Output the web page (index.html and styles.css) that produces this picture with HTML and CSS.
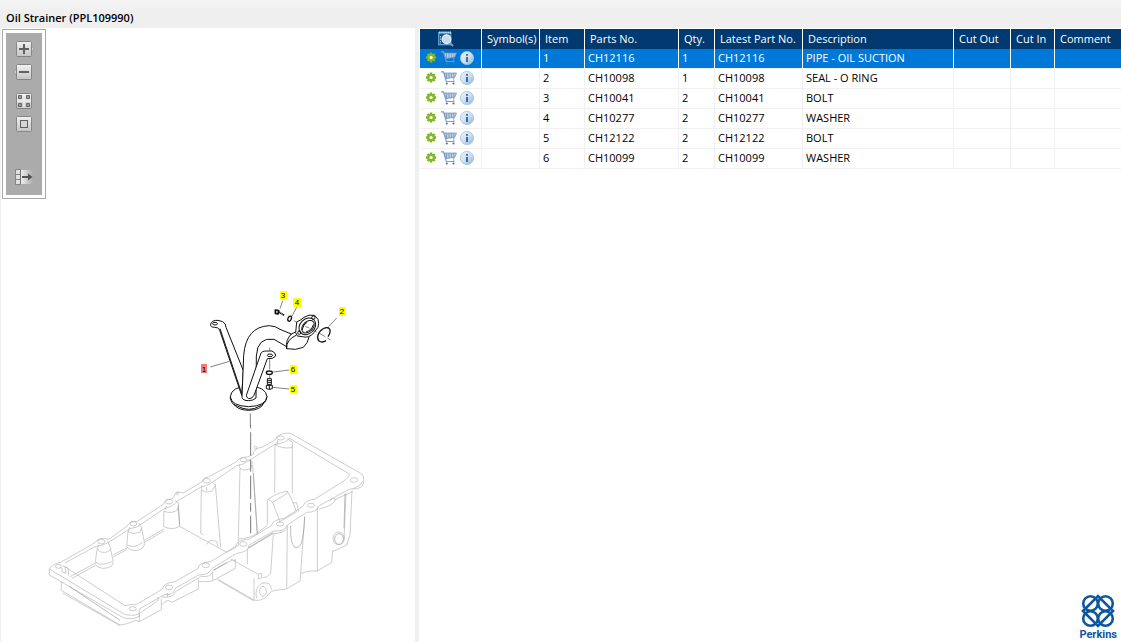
FILE: index.html
```html
<!DOCTYPE html>
<html lang="en">
<head>
    <meta charset="UTF-8">
    <meta name="viewport" content="width=device-width, initial-scale=1.0">
    <title>Oil Strainer (PPL109990)</title>
    <link rel="stylesheet" href="styles.css">
</head>
<body>
    <!-- shared icons -->
    <svg class="sprite" aria-hidden="true">
        <defs>
            <linearGradient id="btnFill" x1="0" y1="0" x2="0" y2="1">
                <stop offset="0" stop-color="#f2f2f2"/>
                <stop offset="1" stop-color="#c4c4c4"/>
            </linearGradient>
            <linearGradient id="fadeFill" x1="0" y1="0" x2="1" y2="0">
                <stop offset="0" stop-color="#eeeeee"/>
                <stop offset="1" stop-color="#ababab"/>
            </linearGradient>
            <linearGradient id="infoFill" x1="0" y1="0" x2="1" y2="1">
                <stop offset="0" stop-color="#edf5fb"/>
                <stop offset="0.5" stop-color="#cfe1f1"/>
                <stop offset="1" stop-color="#8fb3d8"/>
            </linearGradient>
        </defs>
        <symbol id="gear" viewBox="0 0 12 12">
            <g stroke="#7ab51d" stroke-width="2.4">
                <path d="M5 .6V10.400M0 5.500H10.200M1.500 2L8.700 9M8.700 2L1.500 9"/>
            </g>
            <circle cx="5.100" cy="5.500" r="2.700" fill="none" stroke="#86b82b" stroke-width="2"/>
            <circle class="gear-hole" cx="5.100" cy="5.500" r="1.600"/>
        </symbol>
        <symbol id="cart" viewBox="0 0 16 14">
            <path d="M0 .8H2.500L5.300 10.500H13.500" fill="none" stroke="#7f9cc0" stroke-width="1.200"/>
            <path d="M3 2H15.500L13.600 6.500L5 7.500Z" fill="#b9cee4" stroke="#6a8fba" stroke-width=".7"/>
            <path d="M5.600 2V7.500M8 2V7M10.400 2V7M12.800 2V7" stroke="#5c84b3" stroke-width=".6"/>
            <path d="M12.800 7V10" stroke="#7f9cc0" stroke-width=".8"/>
            <circle cx="5.800" cy="12.500" r="1.100" fill="#4a72a5"/>
            <circle cx="12.500" cy="12.500" r="1.100" fill="#4a72a5"/>
        </symbol>
        <symbol id="info" viewBox="0 0 14 14">
            <circle cx="7" cy="7" r="6.600" fill="url(#infoFill)" stroke="#a3c1de" stroke-width=".8"/>
            <path d="M6 3H8V4.800H6ZM6 6H8V11H6Z" fill="#3c6ca5"/>
        </symbol>
    </svg>

    <header class="title-bar">
        <h1>Oil Strainer (PPL109990)</h1>
    </header>

    <main class="viewer">
        <section class="drawing">
            <div class="toolbar">
                <div class="toolbar-inner">
                    <button type="button" aria-label="Zoom in">
                        <svg width="20" height="16" viewBox="0 0 20 16">
                            <path d="M17 4.500L19.500 8L17 11.500Z" fill="#e8e8e8" stroke="#8c8c8c" stroke-width=".6"/>
                            <rect x="2.500" y=".5" width="15" height="15" rx="1" fill="url(#btnFill)" stroke="#858585"/>
                            <path d="M5 8H15M10 3V13" stroke="#606060" stroke-width="2"/>
                        </svg>
                    </button>
                    <button type="button" aria-label="Zoom out">
                        <svg width="20" height="16" viewBox="0 0 20 16">
                            <path d="M3 4.500L.5 8L3 11.500Z" fill="#e8e8e8" stroke="#8c8c8c" stroke-width=".6"/>
                            <rect x="2.500" y=".5" width="15" height="15" rx="1" fill="url(#btnFill)" stroke="#858585"/>
                            <path d="M5 8H15" stroke="#606060" stroke-width="2"/>
                        </svg>
                    </button>
                    <button type="button" class="group-start" aria-label="Show all">
                        <svg width="20" height="16" viewBox="0 0 20 16">
                            <rect x="2.500" y=".5" width="15" height="15" rx="1" fill="url(#btnFill)" stroke="#858585"/>
                            <path d="M10 1V15M3 8H17" stroke="#f4f4f4"/>
                            <path d="M4.500 2.500h3v3h-3zM12.500 2.500h3v3h-3zM4.500 10.500h3v3h-3zM12.500 10.500h3v3h-3z" fill="#999999" stroke="#666666"/>
                        </svg>
                    </button>
                    <button type="button" aria-label="Fit to window">
                        <svg width="20" height="16" viewBox="0 0 20 16">
                            <rect x="2.500" y=".5" width="15" height="15" rx="1" fill="url(#btnFill)" stroke="#858585"/>
                            <rect x="6.500" y="4.500" width="7" height="7" fill="#d6d6d6" stroke="#606060"/>
                        </svg>
                    </button>
                    <button type="button" class="last" aria-label="Hide parts list">
                        <svg width="20" height="16" viewBox="0 0 20 16">
                            <rect x="7" y="1" width="12" height="14" fill="url(#fadeFill)"/>
                            <path d="M1.500 .5h5v15h-5z" fill="#e0e0e0" stroke="#858585"/>
                            <path d="M1 5.500H7M1 10.500H7" stroke="#858585"/>
                            <path d="M6.500 1V15" stroke="#707070"/>
                            <path d="M8 7H14V4.500L18.500 8L14 11.500V9H8Z" fill="#555555"/>
                        </svg>
                    </button>
                </div>
            </div>

            <svg class="diagram" viewBox="1 28 414 614" role="img" aria-label="Exploded view of the oil strainer">
                <!-- oil pan -->
                <svg x="40" y="425" width="340" height="210" viewBox="0 0 1020 630">
                    <g class="pan">
                        <!-- rim -->
                        <path d="M28 432Q40 415 62 412L165 353Q172 340 190 340L206 343L262 303Q268 288 290 290L370 238Q374 222 396 222L402 215Q405 196 430 204L485 171Q490 157 506 155L590 110Q598 96 622 96L640 88Q640 70 668 66L705 45Q712 24 750 24L962 145Q974 150 971 175Q966 192 938 192"/>
                        <path d="M75 414L165 365Q190 362 206 352L270 311Q290 310 306 296L374 250Q400 246 412 228L485 185Q500 184 512 175L590 122Q610 120 624 108L705 58Q740 54 748 40L930 148Q920 165 905 172L825 222Q795 225 788 245L732 280Q698 284 694 302L628 342Q590 345 586 365L512 410Q475 412 475 430L405 470Q370 474 368 492L290 538Q265 538 255 542L88 434Q80 426 68 422"/>
                        <path d="M28 432L250 566Q275 576 298 566L352 528Q360 520 352 516M28 432V450L250 578Q275 586 298 574V552"/>
                        <path d="M298 552L375 508Q400 512 406 490L475 450Q508 450 516 430L590 385Q625 382 628 360L700 318Q736 320 742 300L800 262Q832 262 838 242L925 194Q960 188 968 168"/>
                        <path d="M365 516Q400 520 406 500L484 454Q510 458 518 442M382 504V516M742 310Q730 325 700 326M838 252Q880 242 888 222L938 200M870 228Q880 212 888 226"/>
                        <!-- bolt holes -->
                        <ellipse cx="55" cy="424" rx="9" ry="6"/>
                        <ellipse cx="184" cy="350" rx="11" ry="7"/>
                        <ellipse cx="280" cy="296" rx="10" ry="7"/>
                        <ellipse cx="387" cy="230" rx="11" ry="7"/>
                        <ellipse cx="500" cy="167" rx="11" ry="7"/>
                        <ellipse cx="610" cy="104" rx="10" ry="6"/>
                        <ellipse cx="722" cy="39" rx="11" ry="6"/>
                        <ellipse cx="942" cy="165" rx="11" ry="7"/>
                        <ellipse cx="813" cy="241" rx="11" ry="6"/>
                        <ellipse cx="720" cy="297" rx="11" ry="6"/>
                        <ellipse cx="610" cy="357" rx="11" ry="7"/>
                        <ellipse cx="497" cy="421" rx="11" ry="7"/>
                        <ellipse cx="387" cy="487" rx="11" ry="7"/>
                        <ellipse cx="278" cy="551" rx="11" ry="6"/>
                        <circle cx="647" cy="68" r="4"/>
                        <circle cx="412" cy="205" r="4"/>
                        <!-- posts on the inside wall -->
                        <path d="M172 370L165 415Q170 430 192 430Q222 428 219 408L212 372M172 370Q178 384 194 382Q212 380 212 370L203 350M168 412Q185 425 215 410M172 370L178 360"/>
                        <path d="M264 320L260 365Q268 377 288 377Q316 372 313 352L305 310M264 320Q280 330 300 322L305 308L296 294M262 360Q282 372 308 352M264 320L270 306"/>
                        <path d="M372 258L371 304Q395 318 419 304L415 250M372 258Q390 268 412 256L416 236L405 226M374 256L380 242"/>
                        <path d="M484 196L482 325L490 330M484 196Q500 206 516 198L526 180L516 170M526 178L542 368M500 198V186M484 196L486 180"/>
                        <path d="M600 130L595 340M600 130Q615 140 632 130L638 112L622 104M638 120L652 330M600 130L598 118"/>
                        <path d="M705 55L704 205M705 58Q722 72 756 68L758 52L740 40M757 60V205M712 45V58"/>
                        <!-- inside floor -->
                        <path d="M90 455L165 415M96 460L165 422M219 390L262 368M219 396L260 374M313 346L371 312M313 352L371 318M419 304L560 382M560 382L595 362L595 342Q630 340 652 325L682 300M500 358Q510 340 530 350L535 366M60 425Q70 432 66 440L78 445L75 425L84 430L86 452"/>
                        <path d="M682 298V225Q705 205 742 198L740 206L698 232L720 290M742 198L758 230L770 262M698 232L684 222M758 235L770 232L776 260M716 292L768 262"/>
                        <!-- outer body -->
                        <path d="M64 470V496L240 600L262 596L282 588Q290 584 298 590L364 554V522M68 504L240 602M298 566V590M364 540L378 528Q388 524 396 532L475 492V462M475 470H510L532 460L586 430V402M518 440V464M586 408Q578 400 568 410L520 436"/>
                        <path d="M532 462L642 525Q660 530 680 515Q690 495 715 495L740 492L780 468L782 445Q805 435 832 438L875 412L878 376M535 466L642 528M642 525V460M572 402L655 448V462L665 458V445L655 448"/>
                        <path d="M622 372V418M700 325L692 445Q680 460 668 458M742 302L740 490M782 445L794 275M832 245V438M918 205L912 345M936 196L930 330L920 360L878 380M625 368L700 322"/>
                        <path d="M650 520Q642 490 665 475Q695 468 694 495"/>
                        <ellipse cx="669" cy="499" rx="10" ry="15"/>
                        <ellipse cx="896" cy="340" rx="17" ry="19"/>
                    </g>
                    <g class="pan-dark">
                        <path d="M752 302Q750 355 764 367Q778 370 784 355Q792 330 794 275M640 145L652 325M915 206L912 310M625 370L698 326M520 436L560 412M88 484L240 586M415 240L419 300"/>
                        <ellipse cx="897" cy="342" rx="13" ry="16"/>
                    </g>
                    <path class="axis" d="M632 0V10M632 22V92M632 104V140M632 152V222M632 234V260M632 272V325"/>
                </svg>

                <!-- strainer, bolts and washers -->
                <svg x="190" y="280" width="170" height="150" viewBox="0 0 510 450">
                    <g class="part">
                        <path d="M121 350Q124 320 176 318Q228 320 231 350Q228 378 176 380Q124 378 121 350V356Q128 378 142 378Q176 398 210 378Q228 370 231 350M132 371Q140 390 176 391Q214 390 220 370"/>
                        <path class="solid" d="M62 132Q66 120 84 121L98 125Q108 130 108 142L160 272L155 346L88 148Q84 142 74 142Q60 142 62 132Z"/>
                        <path d="M90 146L155 340"/>
                        <ellipse cx="75" cy="131" rx="7" ry="4"/>
                        <path class="solid" d="M156 352L161 226Q168 140 238 137Q258 138 270 148L304 162L290 200L252 178Q202 170 199 228L198 354Q190 362 176 362Q158 362 156 352Z"/>
                        <path class="solid" d="M290 206Q286 180 304 162L330 150L358 168Q354 190 340 202Q318 212 290 206ZM290 206Q288 180 318 166"/>
                        <path class="solid" d="M317 158L320 126Q334 120 342 112Q356 102 374 106L384 118Q388 130 384 142L372 158Q356 176 338 170L322 168Z"/>
                        <ellipse cx="352" cy="139" rx="22" ry="28" transform="rotate(45 352 139)"/>
                        <ellipse cx="354" cy="140" rx="15" ry="22" transform="rotate(45 354 140)"/>
                        <path d="M336 150Q340 132 352 126M348 156Q366 150 370 134"/>
                        <circle cx="370" cy="113" r="5"/>
                        <circle cx="328" cy="158" r="5"/>
                        <path class="solid" d="M169 346L212 222Q214 213 230 213H246Q258 218 257 228Q250 238 232 236L192 346Q188 356 176 356Q170 354 169 346Z"/>
                        <ellipse cx="240" cy="226" rx="8" ry="4"/>
                    </g>
                    <g class="part">
                        <path class="ring" d="M408 182Q396 190 386 182Q378 170 390 154Q404 140 416 144Q426 152 414 170"/>
                        <ellipse class="ring" cx="299" cy="116" rx="5" ry="8" transform="rotate(22 299 116)"/>
                        <ellipse class="ring" cx="238" cy="278" rx="9" ry="5"/>
                        <path class="bolt" d="M256 90L266 92L264 102L256 100Z"/>
                        <path class="bolt" d="M266 96L283 106" stroke-dasharray="4 1"/>
                        <path d="M232 296H244V314H232ZM232 302H244M232 308H244M229 316H247V326Q238 330 229 326ZM238 316V328"/>
                    </g>
                    <path class="leader" d="M61 261L118 244M278 62L270 86M320 82L306 108M440 114L416 140M250 276L298 270M248 322L298 327M239 203V212M239 238V268M239 285V294M181 400V438M312 122L322 128M346 139L358 144M364 149L380 156M388 160L406 170M412 174L422 180"/>
                </svg>

                <!-- call-outs -->
                <g class="callouts">
                    <rect class="active" x="201" y="364" width="6" height="9"/>
                    <rect x="339" y="307" width="7" height="9"/>
                    <rect x="280" y="291" width="7" height="9"/>
                    <rect x="293" y="298" width="8" height="9"/>
                    <rect x="290" y="385" width="7" height="9"/>
                    <rect x="290" y="365" width="7" height="9"/>
                    <text x="204" y="372">1</text>
                    <text x="342" y="314">2</text>
                    <text x="283" y="298">3</text>
                    <text x="297" y="305">4</text>
                    <text x="293" y="392">5</text>
                    <text x="293" y="372">6</text>
                </g>
            </svg>
        </section>

        <section class="parts">
            <table>
                <colgroup>
                    <col class="col-actions">
                    <col class="col-symbol">
                    <col class="col-item">
                    <col class="col-part">
                    <col class="col-qty">
                    <col class="col-latest">
                    <col class="col-desc">
                    <col class="col-out">
                    <col class="col-in">
                    <col>
                </colgroup>
                <thead>
                    <tr>
                        <th class="preview">
                            <svg width="16" height="16" viewBox="0 0 16 16" role="img" aria-label="Preview">
                                <rect x=".7" y="1.700" width="12" height="12" fill="#174f86" stroke="#5ba3d6" stroke-width="1.300"/>
                                <path d="M1 1.500H13" stroke="#b8dcf4" stroke-width="2" stroke-dasharray="1.500 .6"/>
                                <path d="M2.500 5V13" stroke="#9bc8e8" stroke-dasharray="1.500 1"/>
                                <path d="M11.500 11.500L15 15" stroke="#6fa3cc" stroke-width="2"/>
                                <circle cx="8.500" cy="8.300" r="4.300" fill="#c3dcec" stroke="#e8f2f8" stroke-width="1.300"/>
                            </svg>
                        </th>
                        <th>Symbol(s)</th>
                        <th>Item</th>
                        <th>Parts No.</th>
                        <th>Qty.</th>
                        <th>Latest Part No.</th>
                        <th>Description</th>
                        <th>Cut Out</th>
                        <th>Cut In</th>
                        <th>Comment</th>
                    </tr>
                </thead>
                <tbody>
                    <tr class="selected">
                        <td>
                            <div class="actions">
                                <button type="button" aria-label="Options"><svg width="12" height="12"><use href="#gear"/></svg></button>
                                <button type="button" aria-label="Add to cart"><svg width="16" height="14"><use href="#cart"/></svg></button>
                                <button type="button" aria-label="Part info"><svg width="14" height="14"><use href="#info"/></svg></button>
                            </div>
                        </td>
                        <td></td>
                        <td>1</td>
                        <td>CH12116</td>
                        <td>1</td>
                        <td>CH12116</td>
                        <td>PIPE - OIL SUCTION</td>
                        <td></td>
                        <td></td>
                        <td></td>
                    </tr>
                    <tr>
                        <td>
                            <div class="actions">
                                <button type="button" aria-label="Options"><svg width="12" height="12"><use href="#gear"/></svg></button>
                                <button type="button" aria-label="Add to cart"><svg width="16" height="14"><use href="#cart"/></svg></button>
                                <button type="button" aria-label="Part info"><svg width="14" height="14"><use href="#info"/></svg></button>
                            </div>
                        </td>
                        <td></td>
                        <td>2</td>
                        <td>CH10098</td>
                        <td>1</td>
                        <td>CH10098</td>
                        <td>SEAL - O RING</td>
                        <td></td>
                        <td></td>
                        <td></td>
                    </tr>
                    <tr>
                        <td>
                            <div class="actions">
                                <button type="button" aria-label="Options"><svg width="12" height="12"><use href="#gear"/></svg></button>
                                <button type="button" aria-label="Add to cart"><svg width="16" height="14"><use href="#cart"/></svg></button>
                                <button type="button" aria-label="Part info"><svg width="14" height="14"><use href="#info"/></svg></button>
                            </div>
                        </td>
                        <td></td>
                        <td>3</td>
                        <td>CH10041</td>
                        <td>2</td>
                        <td>CH10041</td>
                        <td>BOLT</td>
                        <td></td>
                        <td></td>
                        <td></td>
                    </tr>
                    <tr>
                        <td>
                            <div class="actions">
                                <button type="button" aria-label="Options"><svg width="12" height="12"><use href="#gear"/></svg></button>
                                <button type="button" aria-label="Add to cart"><svg width="16" height="14"><use href="#cart"/></svg></button>
                                <button type="button" aria-label="Part info"><svg width="14" height="14"><use href="#info"/></svg></button>
                            </div>
                        </td>
                        <td></td>
                        <td>4</td>
                        <td>CH10277</td>
                        <td>2</td>
                        <td>CH10277</td>
                        <td>WASHER</td>
                        <td></td>
                        <td></td>
                        <td></td>
                    </tr>
                    <tr>
                        <td>
                            <div class="actions">
                                <button type="button" aria-label="Options"><svg width="12" height="12"><use href="#gear"/></svg></button>
                                <button type="button" aria-label="Add to cart"><svg width="16" height="14"><use href="#cart"/></svg></button>
                                <button type="button" aria-label="Part info"><svg width="14" height="14"><use href="#info"/></svg></button>
                            </div>
                        </td>
                        <td></td>
                        <td>5</td>
                        <td>CH12122</td>
                        <td>2</td>
                        <td>CH12122</td>
                        <td>BOLT</td>
                        <td></td>
                        <td></td>
                        <td></td>
                    </tr>
                    <tr>
                        <td>
                            <div class="actions">
                                <button type="button" aria-label="Options"><svg width="12" height="12"><use href="#gear"/></svg></button>
                                <button type="button" aria-label="Add to cart"><svg width="16" height="14"><use href="#cart"/></svg></button>
                                <button type="button" aria-label="Part info"><svg width="14" height="14"><use href="#info"/></svg></button>
                            </div>
                        </td>
                        <td></td>
                        <td>6</td>
                        <td>CH10099</td>
                        <td>2</td>
                        <td>CH10099</td>
                        <td>WASHER</td>
                        <td></td>
                        <td></td>
                        <td></td>
                    </tr>
                </tbody>
            </table>

            <div class="brand">
                <svg width="34" height="34" viewBox="0 0 34 34" aria-hidden="true">
                    <g fill="none" stroke="#0d57a0" stroke-width="2.600">
                        <circle cx="9.500" cy="9.500" r="7.300"/>
                        <circle cx="24.500" cy="9.500" r="7.300"/>
                        <circle cx="9.500" cy="24.500" r="7.300"/>
                        <circle cx="24.500" cy="24.500" r="7.300"/>
                        <path d="M2 17L17 2L32 17L17 32Z"/>
                    </g>
                </svg>
                <span>Perkins</span>
            </div>
        </section>
    </main>
</body>
</html>
```
FILE: styles.css
```css
* {
    margin: 0;
    padding: 0;
    box-sizing: border-box;
}

body {
    font-family: "Open Sans", "Noto Sans", sans-serif;
    font-size: 11px;
    line-height: 18px;
    color: #000;
    background-color: #f0f0f0;
    min-height: 100vh;
    display: flex;
    flex-direction: column;
}

button {
    display: block;
    background: none;
    border: none;
    cursor: pointer;
}

svg {
    display: block;
}

.sprite {
    position: absolute;
    width: 0;
    height: 0;
}

.title-bar {
    height: 28px;
    padding: 9px 6px 0;
    background: linear-gradient(#f5f5f5, #efefef 12px);
}

.title-bar h1 {
    font-size: 11px;
    line-height: 18px;
    font-weight: 600;
}

.viewer {
    flex: 1;
    display: flex;
    gap: 4px;
    padding-left: 1px;
}

/* left side: drawing */
.drawing {
    position: relative;
    flex: 0 0 414px;
    background-color: white;
}

.diagram {
    width: 100%;
    height: auto;
}

.toolbar {
    position: absolute;
    top: 1px;
    left: 1px;
    padding: 3px;
    background-color: white;
    border: 1px solid #a9a9a9;
}

.toolbar-inner {
    display: flex;
    flex-direction: column;
    align-items: center;
    gap: 7px;
    width: 36px;
    height: 162px;
    padding: 8px 0 10px;
    background-color: #ababab;
}

.toolbar .group-start {
    margin-top: 6px;
}

.toolbar .last {
    margin-top: auto;
}

.pan, .pan-dark, .axis, .part, .leader {
    fill: none;
    stroke-linejoin: round;
}

.pan {
    stroke: #b4b4b4;
    stroke-width: 2;
}

.pan-dark {
    stroke: #9c9c9c;
    stroke-width: 2;
}

.axis {
    stroke: #777;
    stroke-width: 3;
}

.part {
    stroke: #111;
    stroke-width: 3;
}

.part .solid {
    fill: white;
}

.part .ring {
    stroke-width: 4;
}

.part .bolt {
    stroke-width: 5;
}

.leader {
    stroke: #444;
    stroke-width: 2;
}

.callouts rect {
    fill: #ffff00;
}

.callouts .active {
    fill: #f57a7a;
}

.callouts text {
    font-family: "Liberation Sans", Arial, sans-serif;
    font-size: 8px;
    text-anchor: middle;
}

/* right side: parts list */
.parts {
    flex: 1;
    display: flex;
    flex-direction: column;
    min-width: 0;
    padding: 1px 0 0 1px;
    background-color: white;
}

table {
    width: 100%;
    table-layout: fixed;
    border-collapse: separate;
    border-spacing: 0;
}

.col-actions { width: 62px; }
.col-symbol { width: 58px; }
.col-item { width: 45px; }
.col-part { width: 94px; }
.col-qty { width: 36px; }
.col-latest { width: 88px; }
.col-desc { width: 151px; }
.col-out { width: 57px; }
.col-in { width: 44px; }

th, td {
    height: 20px;
    text-align: left;
    white-space: nowrap;
    border-right: 1px solid #f0f0f0;
}

th:last-child, td:last-child {
    border-right: none;
}

th {
    padding-left: 5px;
    font-weight: normal;
    color: white;
    background-color: #003a70;
    border-right-color: white;
}

th.preview {
    padding-left: 18px;
}

td {
    padding-left: 3px;
    padding-bottom: 2px;
    line-height: 17px;
    border-bottom: 1px solid #f0f0f0;
}

.selected td {
    color: white;
    background-color: #0078d7;
    border-right-color: white;
}

.actions {
    display: flex;
    align-items: center;
    gap: 3px;
    padding-left: 3px;
}

.gear-hole {
    fill: white;
}

.selected .gear-hole {
    fill: #0078d7;
}

.brand {
    display: flex;
    flex-direction: column;
    align-items: center;
    align-self: flex-end;
    margin-top: auto;
    margin-right: 4px;
    font-family: Roboto, "Liberation Sans", sans-serif;
    font-size: 11px;
    line-height: 14px;
    font-weight: bold;
    color: #0d57a0;
}
```
